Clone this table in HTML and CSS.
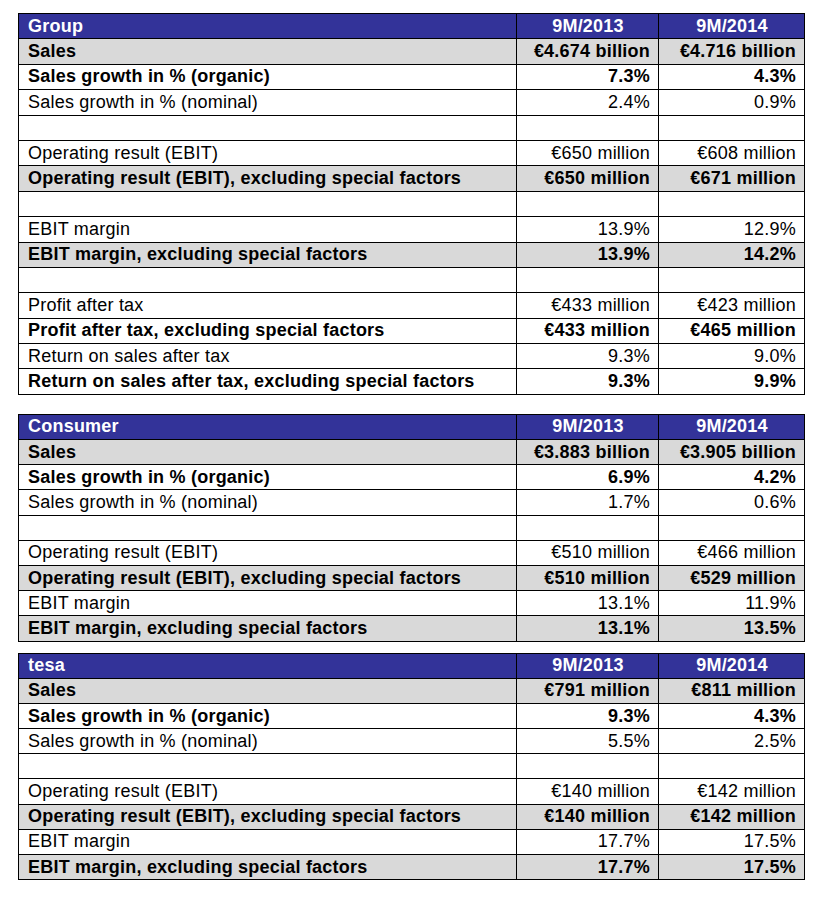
FILE: index.html
```html
<!DOCTYPE html>
<html>
<head>
<meta charset="utf-8">
<link rel="stylesheet" href="styles.css">
</head>
<body>
<table class="kpi t1">
  <colgroup><col class="c-label"><col class="c-val"><col class="c-val2"></colgroup>
  <tr class="head"><td>Group</td><td class="ctr">9M/2013</td><td class="ctr">9M/2014</td></tr>
  <tr class="grey b"><td>Sales</td><td class="num">€4.674 billion</td><td class="num">€4.716 billion</td></tr>
  <tr class="b"><td>Sales growth in % (organic)</td><td class="num">7.3%</td><td class="num">4.3%</td></tr>
  <tr><td>Sales growth in % (nominal)</td><td class="num">2.4%</td><td class="num">0.9%</td></tr>
  <tr><td></td><td></td><td></td></tr>
  <tr><td>Operating result (EBIT)</td><td class="num">€650 million</td><td class="num">€608 million</td></tr>
  <tr class="grey b"><td>Operating result (EBIT), excluding special factors</td><td class="num">€650 million</td><td class="num">€671 million</td></tr>
  <tr><td></td><td></td><td></td></tr>
  <tr><td>EBIT margin</td><td class="num">13.9%</td><td class="num">12.9%</td></tr>
  <tr class="grey b"><td>EBIT margin, excluding special factors</td><td class="num">13.9%</td><td class="num">14.2%</td></tr>
  <tr><td></td><td></td><td></td></tr>
  <tr><td>Profit after tax</td><td class="num">€433 million</td><td class="num">€423 million</td></tr>
  <tr class="b"><td>Profit after tax, excluding special factors</td><td class="num">€433 million</td><td class="num">€465 million</td></tr>
  <tr><td>Return on sales after tax</td><td class="num">9.3%</td><td class="num">9.0%</td></tr>
  <tr class="b"><td>Return on sales after tax, excluding special factors</td><td class="num">9.3%</td><td class="num">9.9%</td></tr>
</table>

<table class="kpi t2">
  <colgroup><col class="c-label"><col class="c-val"><col class="c-val2"></colgroup>
  <tr class="head"><td>Consumer</td><td class="ctr">9M/2013</td><td class="ctr">9M/2014</td></tr>
  <tr class="grey b"><td>Sales</td><td class="num">€3.883 billion</td><td class="num">€3.905 billion</td></tr>
  <tr class="b"><td>Sales growth in % (organic)</td><td class="num">6.9%</td><td class="num">4.2%</td></tr>
  <tr><td>Sales growth in % (nominal)</td><td class="num">1.7%</td><td class="num">0.6%</td></tr>
  <tr><td></td><td></td><td></td></tr>
  <tr><td>Operating result (EBIT)</td><td class="num">€510 million</td><td class="num">€466 million</td></tr>
  <tr class="grey b"><td>Operating result (EBIT), excluding special factors</td><td class="num">€510 million</td><td class="num">€529 million</td></tr>
  <tr><td>EBIT margin</td><td class="num">13.1%</td><td class="num">11.9%</td></tr>
  <tr class="grey b"><td>EBIT margin, excluding special factors</td><td class="num">13.1%</td><td class="num">13.5%</td></tr>
</table>

<table class="kpi t3">
  <colgroup><col class="c-label"><col class="c-val"><col class="c-val2"></colgroup>
  <tr class="head"><td>tesa</td><td class="ctr">9M/2013</td><td class="ctr">9M/2014</td></tr>
  <tr class="grey b"><td>Sales</td><td class="num">€791 million</td><td class="num">€811 million</td></tr>
  <tr class="b"><td>Sales growth in % (organic)</td><td class="num">9.3%</td><td class="num">4.3%</td></tr>
  <tr><td>Sales growth in % (nominal)</td><td class="num">5.5%</td><td class="num">2.5%</td></tr>
  <tr><td></td><td></td><td></td></tr>
  <tr><td>Operating result (EBIT)</td><td class="num">€140 million</td><td class="num">€142 million</td></tr>
  <tr class="grey b"><td>Operating result (EBIT), excluding special factors</td><td class="num">€140 million</td><td class="num">€142 million</td></tr>
  <tr><td>EBIT margin</td><td class="num">17.7%</td><td class="num">17.5%</td></tr>
  <tr class="grey b"><td>EBIT margin, excluding special factors</td><td class="num">17.7%</td><td class="num">17.5%</td></tr>
</table>
</body>
</html>
```

FILE: styles.css
```css
html, body {
  margin: 0;
  padding: 0;
  background: #ffffff;
}
body {
  padding: 13px 0 0 18px;
  font-family: "Liberation Sans", Arial, sans-serif;
  font-size: 18px;
  letter-spacing: 0.22px;
  color: #000;
}
.kpi {
  border-collapse: collapse;
  table-layout: fixed;
  width: 786px;
}
.c-label { width: 498px; }
.c-val { width: 142px; }
.c-val2 { width: 146px; }
.kpi td {
  border: 1px solid #000;
  padding: 0 8px 1px 9px;
  height: 25.4px;
  box-sizing: border-box;
  line-height: 20px;
  white-space: nowrap;
  overflow: hidden;
}
.t2 td, .t3 td { height: 25.2px; }
.t2 { margin-top: 19px; }
.t3 { margin-top: 11px; }
.head td {
  background: #333399;
  color: #fff;
  font-weight: bold;
}
.grey td { background: #d9d9d9; }
.b td { font-weight: bold; }
.num { text-align: right; }
.ctr { text-align: center; }
```
